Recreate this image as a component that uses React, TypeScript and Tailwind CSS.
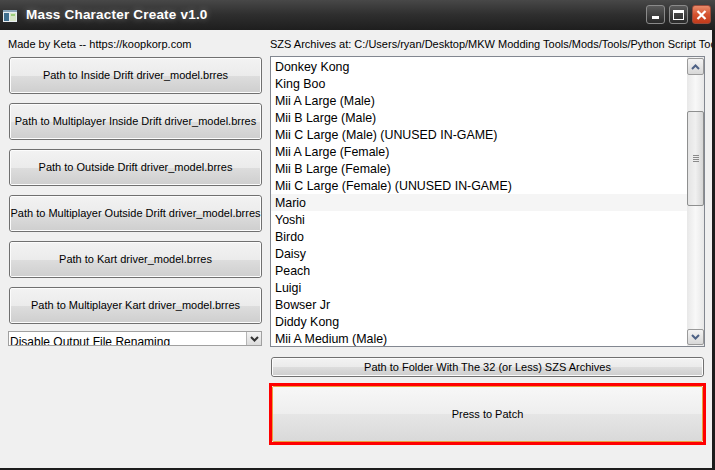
import React from "react";

const items = [
  "Donkey Kong",
  "King Boo",
  "Mii A Large (Male)",
  "Mii B Large (Male)",
  "Mii C Large (Male) (UNUSED IN-GAME)",
  "Mii A Large (Female)",
  "Mii B Large (Female)",
  "Mii C Large (Female) (UNUSED IN-GAME)",
  "Mario",
  "Yoshi",
  "Birdo",
  "Daisy",
  "Peach",
  "Luigi",
  "Bowser Jr",
  "Diddy Kong",
  "Mii A Medium (Male)",
];

const leftButtons = [
  "Path to Inside Drift driver_model.brres",
  "Path to Multiplayer Inside Drift driver_model.brres",
  "Path to Outside Drift driver_model.brres",
  "Path to Multiplayer Outside Drift driver_model.brres",
  "Path to Kart driver_model.brres",
  "Path to Multiplayer Kart driver_model.brres",
];

function WinButton({ children, className = "" }: { children: React.ReactNode; className?: string }) {
  return (
    <div
      className={
        "relative flex items-center justify-center rounded-[3px] border border-[#707070] overflow-hidden " +
        className
      }
    >
      <div className="absolute inset-0 flex flex-col rounded-[2px] border border-[#fcfcfc]">
        <div className="flex-1 bg-gradient-to-b from-[#f2f2f2] to-[#ebebeb]" />
        <div className="flex-1 bg-gradient-to-b from-[#dddddd] to-[#cfcfcf]" />
      </div>
      <span className="relative text-[11px] text-black whitespace-nowrap">{children}</span>
    </div>
  );
}

function ChevronUp() {
  return (
    <svg width="9" height="6" viewBox="0 0 9 6">
      <path d="M1 5 L4.5 1.5 L8 5" fill="none" stroke="#4d6185" strokeWidth="2" />
    </svg>
  );
}

function ChevronDown() {
  return (
    <svg width="9" height="6" viewBox="0 0 9 6">
      <path d="M1 1 L4.5 4.5 L8 1" fill="none" stroke="#4d6185" strokeWidth="2" />
    </svg>
  );
}

export default function App() {
  return (
    <div
      className="w-[715px] h-[470px] flex flex-col bg-[#1c1c1c] overflow-hidden"
      style={{ fontFamily: "Tahoma, 'Liberation Sans', 'DejaVu Sans', sans-serif" }}
    >
      {/* Title bar */}
      <div className="h-[30px] flex items-center bg-gradient-to-b from-[#484848] via-[#2e2e2e] to-[#1e1e1e] pl-[3px] pr-[4px]">
        <svg width="14" height="12" viewBox="0 0 14 12" className="mt-[1px]">
          <rect x="0" y="0" width="14" height="12" fill="#e8eef2" />
          <rect x="0" y="0" width="14" height="2" fill="#8aa4b8" />
          <rect x="1" y="3" width="5" height="8" fill="#3f6f8f" />
          <rect x="7" y="3" width="6" height="8" fill="#d8e6c8" />
          <rect x="8" y="4" width="4" height="2" fill="#9ccf7a" />
        </svg>
        <span
          className="ml-[9px] text-[13.5px] font-bold text-white tracking-[0.2px]"
          style={{ textShadow: "0 0 6px rgba(255,255,255,0.35)" }}
        >
          Mass Character Create v1.0
        </span>
        <div className="ml-auto flex gap-[4px] mt-[-1px]">
          <div className="w-[19px] h-[19px] rounded-[3px] border border-[#8a8a8a] bg-gradient-to-b from-[#5a5a5a] to-[#2a2a2a] flex items-end justify-center pb-[4px]">
            <div className="w-[7px] h-[3px] bg-white" />
          </div>
          <div className="w-[19px] h-[19px] rounded-[3px] border border-[#8a8a8a] bg-gradient-to-b from-[#5a5a5a] to-[#2a2a2a] flex items-center justify-center">
            <div className="w-[11px] h-[10px] border border-white border-t-[3px]" />
          </div>
          <div className="w-[19px] h-[19px] rounded-[3px] border border-[#9a4a3a] bg-gradient-to-b from-[#e88a6a] via-[#d5532f] to-[#c23a1a] flex items-center justify-center">
            <svg width="11" height="10" viewBox="0 0 11 10">
              <path d="M1.5 1 L9.5 9 M9.5 1 L1.5 9" stroke="white" strokeWidth="2.2" />
            </svg>
          </div>
        </div>
      </div>

      {/* Body */}
      <div className="flex-1 mr-[3px] mb-[2px] bg-[#f0f0f0] flex pt-[8px]">
        {/* Left column */}
        <div className="w-[262px] pl-[8px] flex flex-col">
          <div className="h-[13px] text-[11px] leading-[13px] text-black whitespace-nowrap">
            Made by Keta -- https://koopkorp.com
          </div>
          <div className="mt-[6px] flex flex-col gap-[9px] pl-[1px]">
            {leftButtons.map((t) => (
              <WinButton key={t} className="h-[37px]">
                {t}
              </WinButton>
            ))}
          </div>
          <div className="mt-[7px] h-[15px] bg-white border border-[#a0a0a0] flex items-stretch overflow-hidden">
            <div className="flex-1 text-[12px] leading-[15px] pl-[1px] text-black whitespace-nowrap overflow-hidden">
              <span className="relative top-[3px]">Disable Output File Renaming</span>
            </div>
            <div className="w-[15px] border-l border-[#b5b5b5] bg-gradient-to-b from-[#f4f4f4] to-[#dcdcdc] flex items-center justify-center">
              <svg width="9" height="6" viewBox="0 0 9 6">
                <path d="M1 1 L4.5 4.5 L8 1" fill="none" stroke="#333" strokeWidth="2" />
              </svg>
            </div>
          </div>
        </div>

        {/* Right column */}
        <div className="flex-1 ml-[8px] flex flex-col min-w-0">
          <div className="h-[13px] text-[11px] leading-[13px] text-black whitespace-nowrap overflow-hidden">
            SZS Archives at: C:/Users/ryan/Desktop/MKW Modding Tools/Mods/Tools/Python Script Tools
          </div>
          <div className="mt-[5px] w-[435px] h-[291px] border border-[#828790] bg-white flex overflow-hidden">
            <div className="flex-1 pt-[1px] overflow-hidden">
              {items.map((t) => (
                <div
                  key={t}
                  className={
                    "h-[17px] leading-[17px] pl-[4px] text-[12.4px] text-black whitespace-nowrap " +
                    (t === "Mario" ? "bg-[#f5f5f5]" : "")
                  }
                >
                  <span className="relative top-[1px]">{t}</span>
                </div>
              ))}
            </div>
            <div className="w-[17px] flex flex-col bg-gradient-to-r from-[#e8e8e8] via-[#f8f8f8] to-[#e8e8e8] py-[1px]">
              <div className="h-[17px] rounded-[2px] border border-[#9a9a9a] bg-gradient-to-b from-[#f4f4f4] to-[#d8d8d8] flex items-center justify-center">
                <ChevronUp />
              </div>
              <div className="h-[36px]" />
              <div className="h-[95px] rounded-[2px] border border-[#8e8f8f] bg-gradient-to-r from-[#e4e4e4] via-[#f0f0f0] to-[#d6d6d6] flex items-center justify-center">
                <div className="flex flex-col gap-[1px]">
                  <div className="w-[6px] h-[1px] bg-[#8a8a8a]" />
                  <div className="w-[6px] h-[1px] bg-[#8a8a8a]" />
                  <div className="w-[6px] h-[1px] bg-[#8a8a8a]" />
                  <div className="w-[6px] h-[1px] bg-[#8a8a8a]" />
                </div>
              </div>
              <div className="flex-1" />
              <div className="h-[16px] rounded-[2px] border border-[#9a9a9a] bg-gradient-to-b from-[#f4f4f4] to-[#d8d8d8] flex items-center justify-center">
                <ChevronDown />
              </div>
            </div>
          </div>
          <WinButton className="mt-[10px] ml-[1px] w-[433px] h-[20px]">
            Path to Folder With The 32 (or Less) SZS Archives
          </WinButton>
          <div className="mt-[6px] -ml-[1px] w-[437px] h-[62px] border-[3px] border-[#ff0000]">
            <div className="h-full rounded-[2px] border border-[#e8a040] flex flex-col relative overflow-hidden">
              <div className="flex-1 bg-gradient-to-b from-[#f7f7f7] to-[#eeeeee]" />
              <div className="flex-1 bg-gradient-to-b from-[#e6e6e6] to-[#d9d9d9]" />
              <span className="absolute inset-0 flex items-center justify-center text-[11px] text-black">
                Press to Patch
              </span>
            </div>
          </div>
        </div>
      </div>
    </div>
  );
}
